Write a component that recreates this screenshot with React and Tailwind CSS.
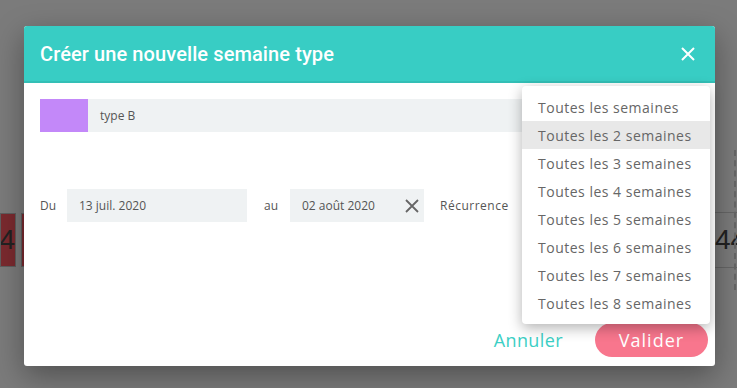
import React from "react";

const items = [
  "Toutes les semaines",
  "Toutes les 2 semaines",
  "Toutes les 3 semaines",
  "Toutes les 4 semaines",
  "Toutes les 5 semaines",
  "Toutes les 6 semaines",
  "Toutes les 7 semaines",
  "Toutes les 8 semaines",
];

const pop = { fontFamily: '"Open Sans", "Noto Sans", sans-serif' };

export default function App() {
  return (
    <div className="relative w-[737px] h-[388px] overflow-hidden bg-[#7b7b7b]">
      {/* background content */}
      <div className="absolute left-0 top-[213px] flex gap-[5px]">
        <div className="w-[16px] h-[54px] bg-[#7a2a2f] border border-[#5e5e5e] flex items-center justify-end overflow-hidden text-[28px] text-[#222]" style={{ fontFamily: '"Liberation Sans", sans-serif' }}>4</div>
        <div className="w-[10px] h-[54px] bg-[#7a2a2f] border border-[#5e5e5e]"></div>
      </div>
      <div className="absolute left-[715px] top-[212px] w-[22px] h-[56px] overflow-hidden border-t border-b border-[#666] flex items-center text-[28px] text-[#222] whitespace-nowrap" style={{ fontFamily: '"Liberation Sans", sans-serif' }}>44</div>
      <div className="absolute left-[734px] top-[150px] h-[140px] border-l-2 border-dashed border-[#666]"></div>

      {/* dialog */}
      <div className="absolute left-[24px] top-[26px] w-[691px] h-[340px] bg-white rounded-[3px] shadow-[0_10px_30px_rgba(0,0,0,0.35)] flex flex-col">
        <div className="h-[57px] bg-[#38cdc4] border-b-2 border-[#33bfb6] rounded-t-[3px] flex items-center justify-between pl-[16px] pr-[20px]">
          <span className="text-white text-[20px] font-medium tracking-[0.1px]" style={{ fontFamily: 'Roboto, sans-serif' }}>Créer une nouvelle semaine type</span>
          <svg width="14" height="14" viewBox="0 0 14 14"><path d="M1 1L13 13M13 1L1 13" stroke="white" strokeWidth="2" /></svg>
        </div>
        <div className="flex-1 flex flex-col px-[16px] pt-[16px]">
          <div className="flex h-[33px]">
            <div className="w-[48px] bg-[#c388f9]"></div>
            <div className="flex-1 bg-[#eff2f3] flex items-center pl-[12px] text-[12px] text-[#555]" style={pop}>type B</div>
          </div>
          <div className="flex items-center h-[33px] mt-[57px] text-[12px] text-[#555]" style={pop}>
            <span className="w-[27px]">Du</span>
            <div className="w-[180px] h-full bg-[#eff2f3] flex items-center pl-[12px]">13 juil. 2020</div>
            <span className="ml-[17px] w-[26px]">au</span>
            <div className="w-[134px] h-full bg-[#eff2f3] flex items-center pl-[12px] justify-between pr-[4px]">
              <span>02 août 2020</span>
              <svg width="16" height="16" viewBox="0 0 16 16"><path d="M2 2L14 14M14 2L2 14" stroke="#666" strokeWidth="1.8" /></svg>
            </div>
            <span className="ml-[16px] tracking-[0.5px]">Récurrence</span>
          </div>
          <div className="mt-auto mb-[9px] flex items-center justify-end gap-[32px]">
            <span className="text-[18px] text-[#3ccfc5] tracking-[0.4px]" style={pop}>Annuler</span>
            <button className="w-[113px] h-[34px] rounded-full bg-[#f8768d] text-white text-[18px] tracking-[1px] mr-[-9px]" style={pop}>Valider</button>
          </div>
        </div>
      </div>

      {/* dropdown */}
      <div className="absolute left-[522px] top-[86px] w-[188px] bg-white rounded-[4px] shadow-[0_4px_14px_rgba(0,0,0,0.3)] py-[7px]">
        {items.map((t, i) => (
          <div key={t} className={`h-[28px] flex items-center pl-[16px] text-[14px] tracking-[0.5px] text-[#666] whitespace-nowrap ${i === 1 ? "bg-[#e8e8e8]" : ""}`} style={pop}>{t}</div>
        ))}
      </div>
    </div>
  );
}
